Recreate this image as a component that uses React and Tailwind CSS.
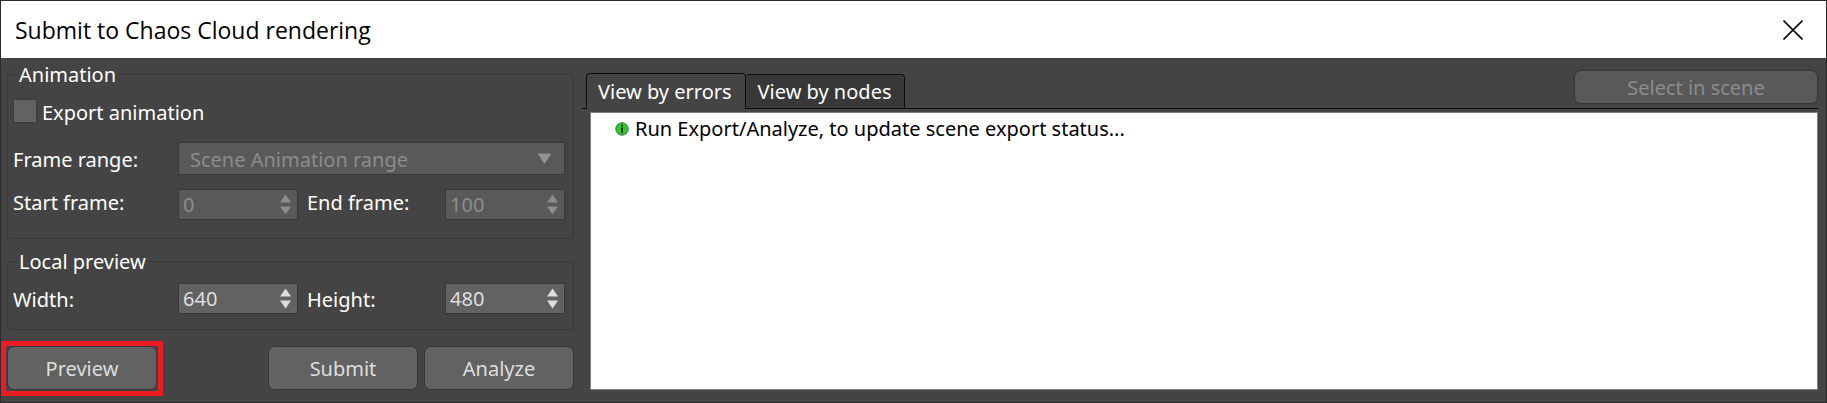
import { useState } from "react";

const field = "border border-[#383838] text-[20px] outline-none";
const enabledTone = "bg-[#626262] text-[#dedede]";
const disabledTone = "bg-[#595959] text-[#8c8c8c]";

function Arrow({ up }) {
  return (
    <svg width="11" height="9" viewBox="0 0 11 9" className="block" aria-hidden="true">
      <path d={up ? "M5.5 0.5 11 8.5H0z" : "M0 0.5H11L5.5 8.5z"} fill="currentColor" />
    </svg>
  );
}

function Spinner({ id, label, initial, disabled, labelClass }) {
  const [value, setValue] = useState(initial);
  const tone = disabled ? disabledTone : enabledTone;
  return (
    <>
      <label htmlFor={id} className={labelClass}>
        {label}
      </label>
      <div className={`flex h-[31px] w-[120px] shrink-0 items-center ${field} ${tone}`}>
        <input
          id={id}
          type="number"
          value={value}
          disabled={disabled}
          onChange={(e) => setValue(Number(e.target.value))}
          className="w-full min-w-0 flex-1 appearance-none bg-transparent pl-1 outline-none [-moz-appearance:textfield] [&::-webkit-inner-spin-button]:appearance-none"
        />
        <div className="mr-[6px] flex flex-col gap-[3px]">
          <button type="button" aria-label={`Increase ${label}`} disabled={disabled} onClick={() => setValue(value + 1)}>
            <Arrow up />
          </button>
          <button type="button" aria-label={`Decrease ${label}`} disabled={disabled} onClick={() => setValue(value - 1)}>
            <Arrow />
          </button>
        </div>
      </div>
    </>
  );
}

function Group({ title, className, children }) {
  return (
    <fieldset className={`min-w-0 rounded-[4px] border border-[#383838] pr-2 pl-[5px] ${className}`}>
      <legend className="ml-1 h-7 px-[2px] leading-[30px]">{title}</legend>
      {children}
    </fieldset>
  );
}

function PushButton({ children }) {
  return (
    <button type="button" className={`h-11 w-[150px] rounded-[7px] pt-[2px] ${field} ${enabledTone}`}>
      {children}
    </button>
  );
}

export default function App() {
  const [tab, setTab] = useState("errors");
  const tabClass = (name) =>
    tab === name
      ? "h-9 rounded-t-[4px] border-x border-t border-[#0d0d0d] pl-[11px] pr-[13px]"
      : "h-[35px] rounded-t-[4px] border border-l-0 border-[#0d0d0d] bg-[#383838] px-3";

  return (
    <div className="flex min-h-screen flex-col border border-[#2a2a2a] bg-[#444444] font-['Noto_Sans',sans-serif] text-[20px] leading-6 text-white">
      <header className="flex h-[57px] shrink-0 items-center justify-between bg-white pr-[23px] pl-[14px] text-black">
        <h1 className="font-['Open_Sans',sans-serif] text-[23px]">Submit to Chaos Cloud rendering</h1>
        <button type="button" aria-label="Close">
          <svg width="20" height="20" viewBox="0 0 20 20" className="block" aria-hidden="true">
            <path d="M0.5 0.5 19.5 19.5M19.5 0.5 0.5 19.5" stroke="#0a0a0a" strokeWidth="1.6" fill="none" />
          </svg>
        </button>
      </header>

      <main className="flex flex-1 gap-2 pr-2 pb-3 pl-[6px]">
        <form className="w-[567px] shrink-0 pt-[2px]" onSubmit={(e) => e.preventDefault()}>
          <Group title="Animation" className="pt-[11px] pb-[18px]">
            <div className="flex h-6 items-center gap-[5px]">
              <input
                id="export"
                type="checkbox"
                className="size-6 appearance-none border border-[#3b3b3b] bg-[#626262] checked:bg-[#9a9a9a]"
              />
              <label htmlFor="export" className="pt-[3px]">Export animation</label>
            </div>
            <div className="mt-[19px] flex items-center">
              <label htmlFor="range" className="w-[165px] shrink-0 pt-[2px]">
                Frame range:
              </label>
              <div className={`grid h-[33px] flex-1 items-center ${field} ${disabledTone}`}>
                <select
                  id="range"
                  disabled
                  className="col-start-1 row-start-1 w-full appearance-none bg-transparent pt-[2px] pl-[11px] outline-none disabled:opacity-100"
                >
                  <option>Scene Animation range</option>
                </select>
                <svg
                  width="15"
                  height="11"
                  viewBox="0 0 15 11"
                  className="col-start-1 row-start-1 mr-3 justify-self-end"
                  aria-hidden="true"
                >
                  <path d="M0.5 0.5H14.5L7.5 11z" fill="#929292" />
                </svg>
              </div>
            </div>
            <div className="mt-[14px] flex items-center">
              <Spinner id="start" label="Start frame:" initial={0} disabled labelClass="w-[165px] shrink-0 pb-[3px]" />
              <Spinner id="end" label="End frame:" initial={100} disabled labelClass="flex-1 pb-[3px] pl-[9px]" />
            </div>
          </Group>

          <Group title="Local preview" className="mt-2 pt-2 pb-[15px]">
            <div className="flex items-center">
              <Spinner id="width" label="Width:" initial={640} labelClass="w-[165px] shrink-0 pt-[2px]" />
              <Spinner id="height" label="Height:" initial={480} labelClass="flex-1 pt-[2px] pl-[9px]" />
            </div>
          </Group>

          <div className="mt-4 flex justify-between">
            <div className="relative flex">
              <PushButton>Preview</PushButton>
              <div className="pointer-events-none absolute -inset-x-[6px] -top-[5px] -bottom-[6px] border-[5px] border-[#ed1c24]" />
            </div>
            <div className="flex gap-[6px]">
              <PushButton>Submit</PushButton>
              <PushButton>Analyze</PushButton>
            </div>
          </div>
        </form>

        <section className="flex min-w-0 flex-1 flex-col pt-3">
          <div className="flex items-end" role="tablist">
            <div className="w-1 border-b border-[#0d0d0d]" />
            <button type="button" role="tab" aria-selected={tab === "errors"} onClick={() => setTab("errors")} className={tabClass("errors")}>
              View by errors
            </button>
            <button type="button" role="tab" aria-selected={tab === "nodes"} onClick={() => setTab("nodes")} className={tabClass("nodes")}>
              View by nodes
            </button>
            <div className="flex flex-1 justify-end border-b border-[#0d0d0d] pb-1">
              <button type="button" disabled className={`h-[34px] w-[244px] rounded-[7px] pt-[2px] ${field} ${disabledTone}`}>
                Select in scene
              </button>
            </div>
          </div>
          <div className="mt-[3px] ml-2 flex-1 border border-[#7d7d86] bg-white text-black" role="tabpanel">
            <ul>
              <li className="flex items-center gap-[6px] pt-1 pl-6">
                <svg width="14" height="14" viewBox="0 0 14 14" aria-hidden="true">
                  <circle cx="7" cy="7" r="6.2" fill="#35c435" stroke="#2c7a2c" />
                  <path d="M6 2.8h2v1.6H6zM6 5.4h2v5.6H6z" fill="#0b3d0b" />
                </svg>
                Run Export/Analyze, to update scene export status...
              </li>
            </ul>
          </div>
        </section>
      </main>
    </div>
  );
}
